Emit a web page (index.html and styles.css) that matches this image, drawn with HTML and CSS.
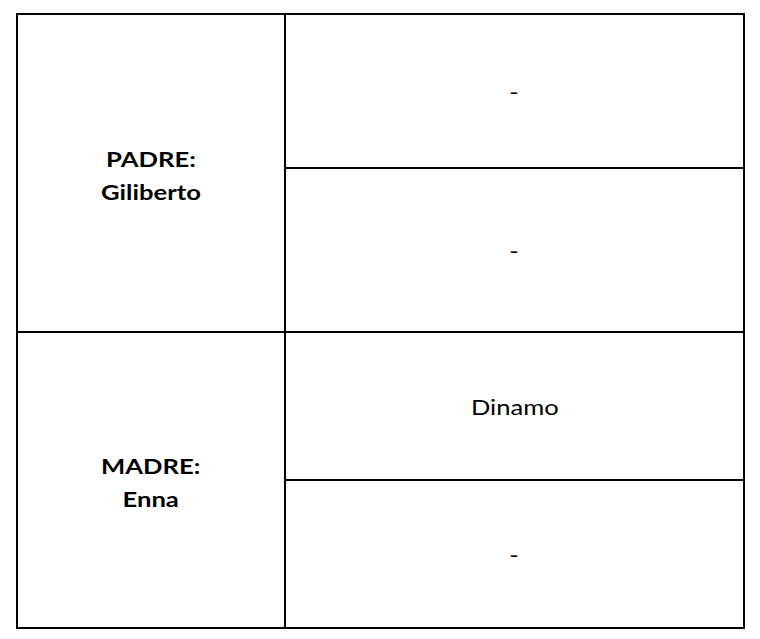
FILE: index.html
```html
<!DOCTYPE html>
<html lang="es">
<head>
<meta charset="utf-8">
<title>Genealogía</title>
<link rel="stylesheet" href="styles.css">
</head>
<body>
<div class="sheet">
  <div class="cell parent parent-top"><span class="label">PADRE:<br>Giliberto</span></div>
  <div class="cell child"><span class="value">-</span></div>
  <div class="cell child"><span class="value">-</span></div>
  <div class="cell parent parent-bottom"><span class="label">MADRE:<br>Enna</span></div>
  <div class="cell child"><span class="value">Dinamo</span></div>
  <div class="cell child"><span class="value">-</span></div>
</div>
</body>
</html>
```

FILE: styles.css
```css
html, body {
  margin: 0;
  padding: 0;
  background: #fff;
}

body {
  font-family: Lato, "Open Sans", "Liberation Sans", sans-serif;
  color: #000;
}

.sheet {
  margin: 13px 0 0 16px;
  width: 725px;
  display: grid;
  grid-template-columns: 266px 457px;
  grid-template-rows: 152px 162px 146px 146px;
  gap: 2px;
  background: #000;
  border: 2px solid #000;
}

.cell {
  background: #fff;
  display: flex;
  align-items: center;
  justify-content: center;
  text-align: center;
}

.parent-top {
  grid-column: 1;
  grid-row: 1 / span 2;
}

.parent-bottom {
  grid-column: 1;
  grid-row: 3 / span 2;
}

.label {
  display: inline-block;
  font-weight: 700;
  font-size: 21px;
  line-height: 33px;
  transform: scaleX(1.22);
  padding-top: 4px;
}

.value {
  display: inline-block;
  font-size: 22px;
  line-height: 30px;
  transform: scaleX(1.16);
  padding-top: 2px;
}
```
